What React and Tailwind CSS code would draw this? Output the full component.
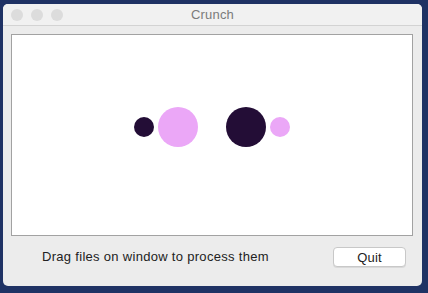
export default function App() {
  return (
    <div
      className="w-[428px] h-[293px] bg-[#1f3264] pl-[3px] pt-[4px]"
      style={{ fontFamily: '"Liberation Sans", Arial, sans-serif' }}
    >
      <div className="w-[419px] h-[282px] rounded-[5px] bg-[#ececec] overflow-hidden flex flex-col">
        {/* title bar */}
        <div className="relative h-[22px] shrink-0 bg-[#f1f1f1] border-b border-[#d3d3d3] flex items-center justify-center">
          <div className="absolute left-[8px] top-[5px] flex gap-[8px]">
            <span className="w-[12px] h-[12px] rounded-full bg-[#dcdcdc]" />
            <span className="w-[12px] h-[12px] rounded-full bg-[#dcdcdc]" />
            <span className="w-[12px] h-[12px] rounded-full bg-[#dcdcdc]" />
          </div>
          <span className="text-[13px] text-[#7b7b7b] leading-none tracking-[0.2px]">Crunch</span>
        </div>

        {/* drop area */}
        <div className="mt-[8px] ml-[8px] w-[402px] h-[202px] bg-white border border-[#a2a2a2] flex justify-center pt-[72px]">
          <div className="flex items-center h-[40px]">
            <span className="w-[20px] h-[20px] rounded-full bg-[#230d36]" />
            <span className="ml-[4px] w-[40px] h-[40px] rounded-full bg-[#eba7f7]" />
            <span className="ml-[28px] w-[40px] h-[40px] rounded-full bg-[#230d36]" />
            <span className="ml-[4px] w-[20px] h-[20px] rounded-full bg-[#eba7f7]" />
          </div>
        </div>

        {/* bottom row */}
        <div className="flex items-center mt-[11px] pl-[39px]">
          <span className="text-[13px] text-[#222] w-[291px] tracking-[0.3px]">Drag files on window to process them</span>
          <button className="w-[73px] h-[20px] bg-white rounded-[4px] border border-[#c8c8c8] shadow-[0_1px_0_rgba(0,0,0,0.08)] text-[13px] text-[#222] leading-none tracking-[0.2px]">
            Quit
          </button>
        </div>
      </div>
    </div>
  );
}
